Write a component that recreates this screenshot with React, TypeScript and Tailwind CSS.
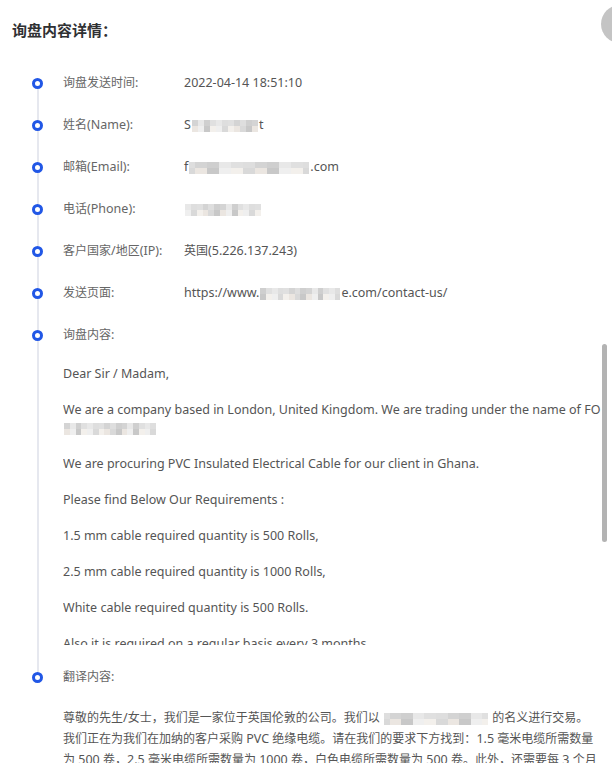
import React from "react";

const PAL = ["#e8e8e8", "#d9d9d9", "#d4d4d4", "#efefef", "#e0e0e0", "#ebe6e1", "#cfcfcf", "#f3f0ec", "#dedede", "#c8c8c8"];

function Blur({ w, seed = 1, h = 12 }: { w: number; seed?: number; h?: number }) {
  const cols = Math.ceil(w / 6);
  const rows = Math.max(1, Math.round(h / 6));
  return (
    <span className="mx-[1px] inline-flex flex-col align-middle blur-[0.6px]" style={{ width: w }}>
      {Array.from({ length: rows }).map((_, r) => (
        <span key={r} className="flex">
          {Array.from({ length: cols }).map((_, c) => (
            <span
              key={c}
              className="block h-[6px] w-[6px]"
              style={{ background: PAL[(c * 7 + r * 3 + seed * 5 + ((c * c + seed) % 4)) % PAL.length] }}
            />
          ))}
        </span>
      ))}
    </span>
  );
}

const CJK = /[\u3000-\u303f\u4e00-\u9fff\uff00-\uffef]/;

function T({ s }: { s: string }) {
  const parts = s.split(/([\u3000-\u303f\u4e00-\u9fff\uff00-\uffef]+)/);
  return (
    <>
      {parts.map((p, i) =>
        p === "" ? null : CJK.test(p) ? (
          <span key={i} className="text-[12px]">
            {p}
          </span>
        ) : (
          <span key={i} className="align-top text-[12.5px]">
            {p}
          </span>
        )
      )}
    </>
  );
}

function Item({ first, last, children, pb }: { first?: boolean; last?: boolean; children: React.ReactNode; pb: string }) {
  return (
    <div className="flex">
      <div className="flex w-[11px] flex-col items-center">
        <div className={first ? "h-1" : "h-1 w-[2px] bg-[#e6e8ef]"} />
        <div className="h-[11px] w-[11px] rounded-full border-[3px] border-[#2157e6] bg-white" />
        {!last && <div className="w-[2px] flex-1 bg-[#e6e8ef]" />}
      </div>
      <div className={"ml-[20px] min-w-0 flex-1 " + pb}>{children}</div>
    </div>
  );
}

function Row({ label, children, first }: { label: string; children: React.ReactNode; first?: boolean }) {
  return (
    <Item first={first} pb="pb-6">
      <div className="flex h-[18px] items-center text-[12px] leading-[18px]">
        <div className="w-[121px] shrink-0 whitespace-nowrap text-[#666]">
          <T s={label} />
        </div>
        <div className="whitespace-nowrap text-[12.5px] text-[#555]">{children}</div>
      </div>
    </Item>
  );
}

const paras = [
  "Dear Sir / Madam,",
  null,
  "We are procuring PVC Insulated Electrical Cable for our client in Ghana.",
  "Please find Below Our Requirements :",
  "1.5 mm cable required quantity is 500 Rolls,",
  "2.5 mm cable required quantity is 1000 Rolls,",
  "White cable required quantity is 500 Rolls.",
  "Also it is required on a regular basis every 3 months.",
  "Kindly send us your best price and delivery time.",
];

export default function App() {
  return (
    <div
      className="relative h-[763px] w-[612px] overflow-hidden bg-white"
      style={{ fontFamily: '"Noto Sans", "Noto Sans CJK SC", sans-serif' }}
    >
      <h2 className="pl-3 pt-[18px] text-[15px] font-bold leading-6 text-[#303133]">询盘内容详情：</h2>
      <div className="mt-8 pl-8 pr-[6px]">
        <Row label="询盘发送时间:" first>
          2022-04-14 18:51:10
        </Row>
        <Row label="姓名(Name):">
          S<Blur w={66} seed={2} />t
        </Row>
        <Row label="邮箱(Email):">
          f<Blur w={120} seed={3} />.com
        </Row>
        <Row label="电话(Phone):">
          <Blur w={76} seed={4} />
        </Row>
        <Row label="客户国家/地区(IP):">
          <T s="英国(5.226.137.243)" />
        </Row>
        <Row label="发送页面:">
          https://www.<Blur w={80} seed={5} />e.com/contact-us/
        </Row>
        <Item pb="pb-[23px]">
          <div className="h-[18px] text-[12px] leading-[18px] text-[#666]">
            <T s="询盘内容:" />
          </div>
          <div className="mt-[21px] h-[280px] overflow-hidden text-[12.5px] leading-[18px] text-[#555]">
            {paras.map((p, i) =>
              p === null ? (
                <p key={i} className="mb-[18px]">
                  We are a company based in London, United Kingdom. We are trading under the name of FO{" "}
                  <Blur w={92} seed={6} h={12} />
                </p>
              ) : (
                <p key={i} className="mb-[18px]">
                  {p}
                </p>
              )
            )}
          </div>
        </Item>
        <Item last pb="pb-0">
          <div className="h-[18px] text-[12px] leading-[18px] text-[#666]">
            <T s="翻译内容:" />
          </div>
          <p className="mt-[21px] pr-[6px] text-[12px] leading-[21px] text-[#555]">
            <T s="尊敬的先生/女士，我们是一家位于英国伦敦的公司。我们以 " />
            <Blur w={104} seed={7} />
            <T s=" 的名义进行交易。我们正在为我们在加纳的客户采购 PVC 绝缘电缆。请在我们的要求下方找到：1.5 毫米电缆所需数量为 500 卷，2.5 毫米电缆所需数量为 1000 卷，白色电缆所需数量为 500 卷。此外，还需要每 3 个月定期供货一次。请向我们发送您的最优价格和交货时间。" />
          </p>
        </Item>
      </div>
      <div className="absolute left-[601px] top-[5px] h-[38px] w-[38px] rounded-full bg-[#c4c4c4]" />
      <div className="absolute left-[602px] top-[344px] h-[198px] w-[5px] rounded-full bg-[#b3b3b3]" />
    </div>
  );
}
